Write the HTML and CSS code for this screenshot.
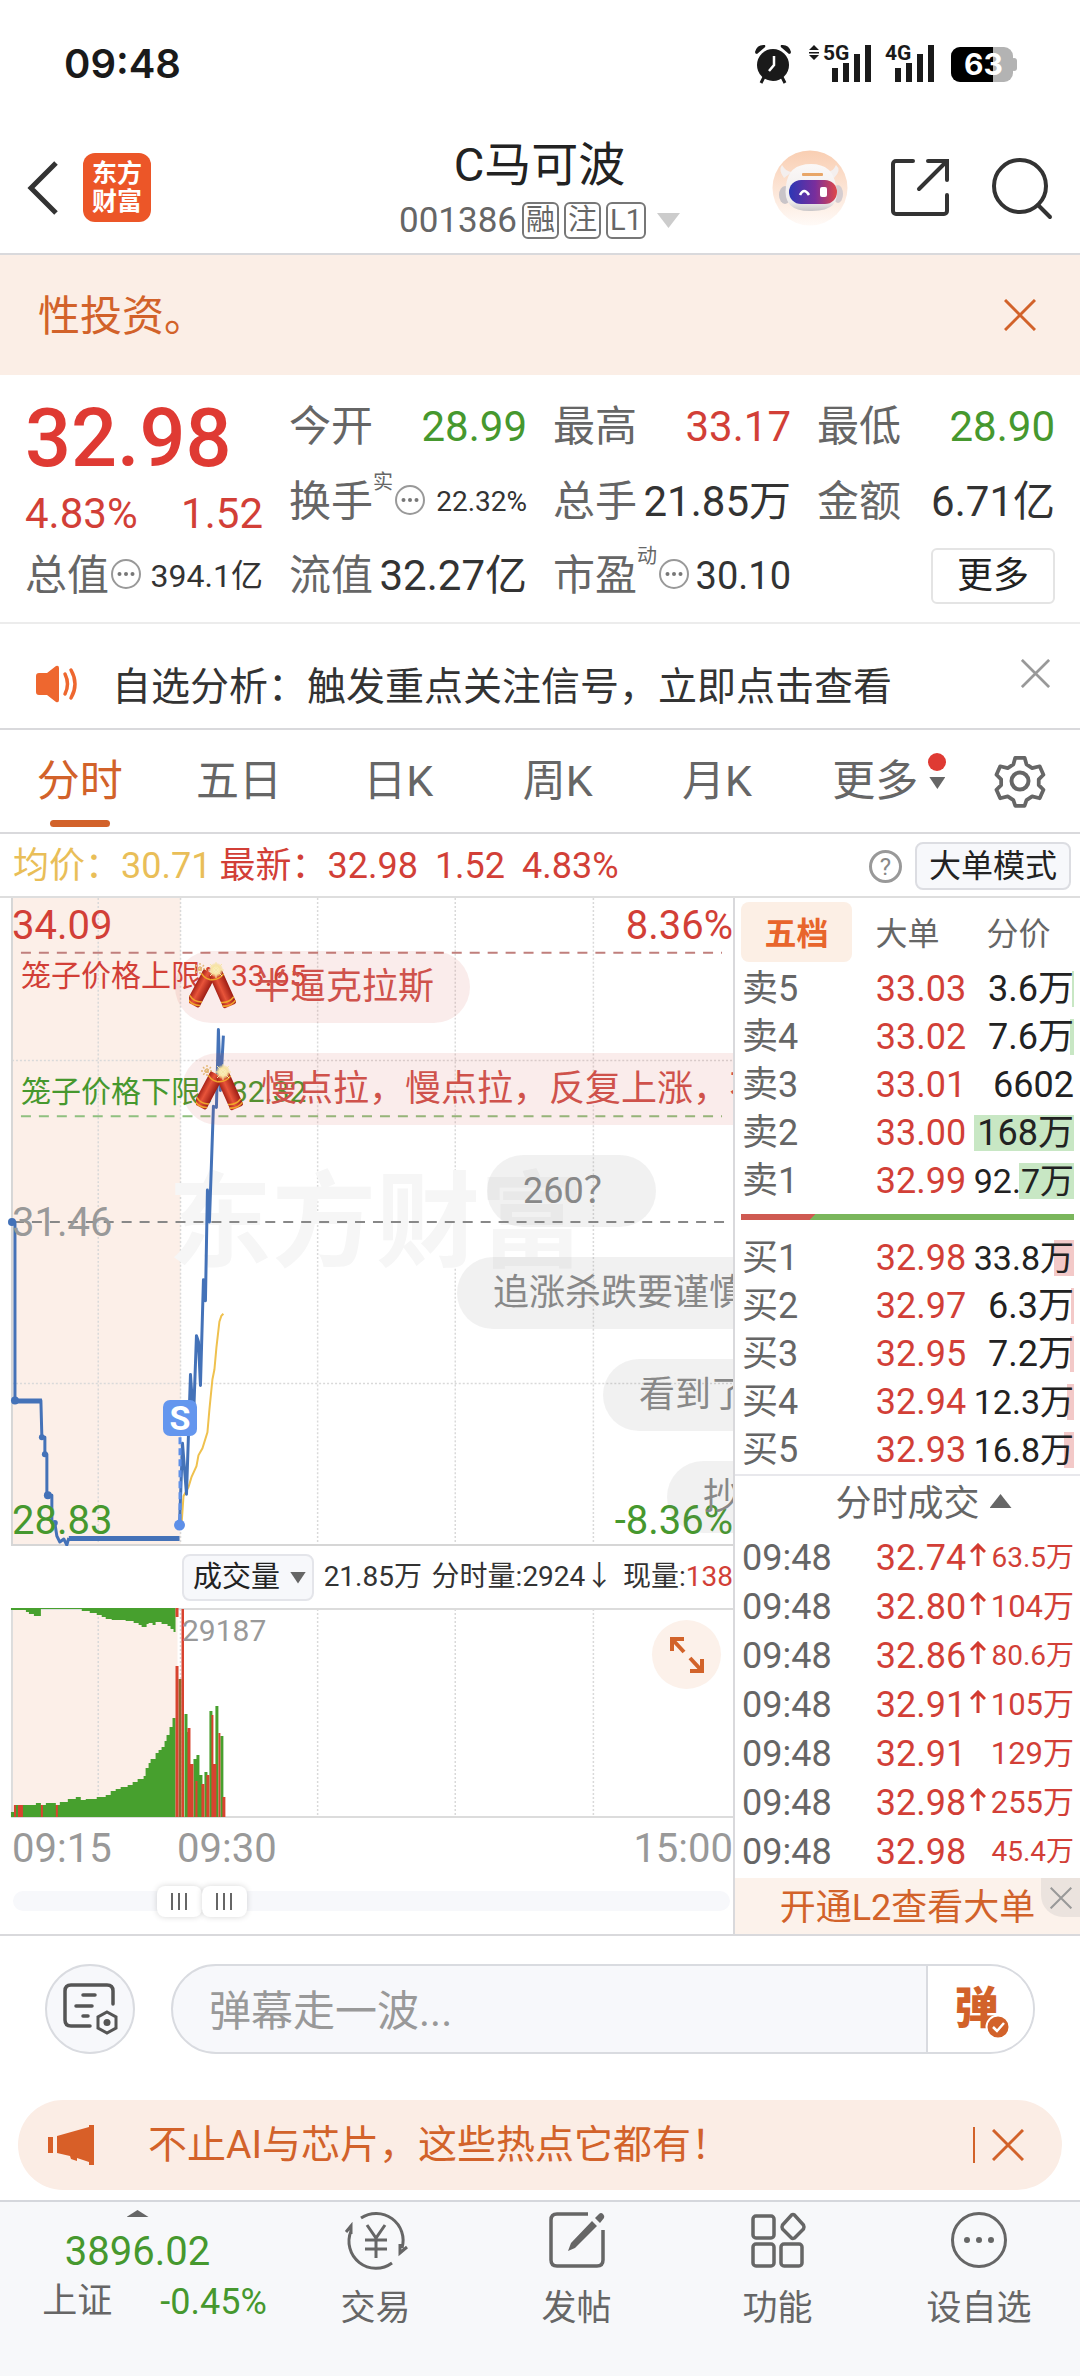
FILE: index.html
```html
<!DOCTYPE html>
<html lang="zh-CN">
<head>
<meta charset="utf-8">
<meta name="viewport" content="width=device-width, initial-scale=1">
<title>C马可波 001386</title>
<link rel="stylesheet" href="styles.css">
</head>
<body>
<svg class="defs" aria-hidden="true">
  <defs>
    <linearGradient id="tube" x1="0" y1="0" x2="1" y2="0"><stop offset="0" stop-color="#a82318"/><stop offset=".4" stop-color="#e8543a"/><stop offset="1" stop-color="#9c1c14"/></linearGradient>
    <radialGradient id="spark"><stop offset="0" stop-color="#fffbe0"/><stop offset=".6" stop-color="#f8e3a0"/><stop offset="1" stop-color="#f3d98c" stop-opacity=".3"/></radialGradient>
    <symbol id="cracker" viewBox="0 0 46 50">
      <path d="M10 1v12M4 7h12M6 3l8 8M14 3l-8 8" stroke="#e3b878" stroke-width="1.4" stroke-dasharray="2 1"/>
      <g transform="rotate(28 19 12)"><rect x="12" y="10" width="14" height="37" rx="2" fill="url(#tube)"/><path d="M12 15q7 4 14 0M12 40q7 4 14 0M12 44q7 4 14 0" stroke="#f0a52c" stroke-width="1.6" fill="none"/></g>
      <g transform="rotate(-24 26 12)"><rect x="19" y="10" width="14" height="37" rx="2" fill="url(#tube)"/><path d="M19 15q7 4 14 0M19 40q7 4 14 0M19 44q7 4 14 0" stroke="#f0a52c" stroke-width="1.6" fill="none"/></g>
      <circle cx="26" cy="8" r="7" fill="url(#spark)"/>
      <path d="M26 0v16M18 8h16M20 2l12 12M32 2L20 14" stroke="#f6e6a8" stroke-width="1"/>
    </symbol>
    <symbol id="cross" viewBox="0 0 32 32"><path d="M1 1l30 30M31 1L1 31" fill="none" stroke="currentColor" stroke-width="3"/></symbol>
    <symbol id="dots" viewBox="0 0 32 32"><circle cx="16" cy="16" r="14" fill="none" stroke="#999" stroke-width="2"/><g fill="#777"><circle cx="9.500" cy="16" r="2"/><circle cx="16" cy="16" r="2"/><circle cx="22.500" cy="16" r="2"/></g></symbol>
    <symbol id="up" viewBox="0 0 16 24"><path d="M8 23V3M1 9l7-7 7 7" fill="none" stroke="#d23a30" stroke-width="3"/></symbol>
  </defs>
</svg>

<div class="status">
  <span class="clock">09:48</span>
  <svg class="status-icons" width="264" height="42" viewBox="0 0 264 42" role="img" aria-label="闹钟 5G 4G 电量63">
    <g fill="#1a1a1a">
      <circle cx="18" cy="22" r="16"/>
      <path d="M0 9Q2 1 10 2Q11 4 9 5L2 11Q0 11 0 9zM36 9Q34 1 26 2Q25 4 27 5L34 11Q36 11 36 9z"/>
      <path d="M9 34l-3 6M27 34l3 6" stroke="#1a1a1a" stroke-width="3"/>
      <path d="M19 13v9l-5 6" stroke="#fff" stroke-width="2.500" fill="none"/>
      <path d="M59 2l5 5H54zM59 17l-5-5h10zM54 9h10v1.500H54z"/>
      <text x="68" y="17" class="net">5G</text><text x="130" y="17" class="net">4G</text>
      <path d="M77 25h6v14h-6zM88 20h6v19h-6zM99 11h6v28h-6zM110 2h6v37h-6zM140 25h6v14h-6zM151 20h6v19h-6zM162 11h6v28h-6zM173 2h6v37h-6z"/>
    </g>
    <rect x="196" y="4" width="62" height="35" rx="9" fill="#b3b3b3"/><rect x="256" y="15" width="6" height="13" rx="3" fill="#b3b3b3"/>
    <path d="M205 4h33v35h-33a9 9 0 0 1-9-9V13a9 9 0 0 1 9-9z" fill="#000"/>
    <text x="209" y="32" class="bat">63</text>
  </svg>
</div>

<header class="top">
  <div class="top-left">
    <button class="icon-btn" aria-label="返回"><svg width="32" height="56" viewBox="0 0 32 56"><path d="M29 3L4 28l25 25" fill="none" stroke="#333" stroke-width="5"/></svg></button>
    <a class="logo" href="#"><span>东方</span><span>财富</span></a>
  </div>
  <div class="top-mid">
    <h1>C马可波</h1>
    <p class="code"><span>001386</span><span class="tag">融</span><span class="tag">注</span><span class="tag">L1</span><i class="tri-down big"></i></p>
  </div>
  <div class="top-right">
    <button class="icon-btn" aria-label="助手"><svg width="76" height="76" viewBox="0 0 76 76">
      <defs><linearGradient id="rb" x2="0" y2="1"><stop stop-color="#f9ceb2"/><stop offset="1" stop-color="#fffaf7"/></linearGradient><linearGradient id="rv"><stop stop-color="#2b37b5"/><stop offset=".55" stop-color="#7a2e9c"/><stop offset="1" stop-color="#e04848"/></linearGradient><linearGradient id="rh" x2="0" y2="1"><stop stop-color="#fbf8f7"/><stop offset=".8" stop-color="#efecec"/><stop offset="1" stop-color="#c9c6c8"/></linearGradient></defs>
      <circle cx="38" cy="38" r="37.500" fill="url(#rb)"/>
      <path d="M12 28Q6 20 10 15Q14 22 20 22zM62 28Q70 20 64 15Q61 22 55 22z" fill="#f4efee"/>
      <ellipse cx="13" cy="45" rx="6" ry="9" fill="#c9c4c8"/><ellipse cx="66" cy="44" rx="5" ry="9" fill="#d5cdd0"/>
      <path d="M14 36Q16 14 39 14Q61 14 64 36Q70 61 40 61Q10 62 14 36z" fill="url(#rh)"/>
      <rect x="17" y="30" width="48" height="24" rx="12" fill="url(#rv)"/>
      <rect x="30" y="23" width="21" height="3" rx="1" fill="#e8a668"/>
      <path d="M28 45q4-8 9 0" stroke="#fff" stroke-width="2.600" fill="none"/><rect x="48" y="37" width="7" height="10" rx="2" fill="#fff"/>
    </svg></button>
    <button class="icon-btn" aria-label="分享"><svg width="60" height="60" viewBox="0 0 60 60"><g fill="none" stroke="#333" stroke-width="4" stroke-linecap="round"><path d="M23 3H6a3 3 0 0 0-3 3v47a3 3 0 0 0 3 3h48a3 3 0 0 0 3-3V37M38 3h19v19M56 4L29 31"/></g></svg></button>
    <button class="icon-btn" aria-label="搜索"><svg width="60" height="60" viewBox="0 0 60 60"><g fill="none" stroke="#333" stroke-width="4" stroke-linecap="round"><circle cx="28" cy="28" r="26"/><path d="M46 47l12 12"/></g></svg></button>
  </div>
</header>

<div class="notice">
  <span>性投资。</span>
  <button class="icon-btn orange" aria-label="关闭"><svg width="32" height="32"><use href="#cross"/></svg></button>
</div>

<section class="quote">
  <div class="qcol">
    <div class="price">32.98</div>
    <div class="chg red"><span>4.83%</span><span>1.52</span></div>
    <div class="qrow"><span class="lab">总值<svg class="dots"><use href="#dots"/></svg></span><span class="v-md">394.1亿</span></div>
  </div>
  <div class="qcol">
    <div class="qrow"><span class="lab">今开</span><span class="green">28.99</span></div>
    <div class="qrow"><span class="lab">换手<small>实</small><svg class="dots"><use href="#dots"/></svg></span><span class="v-sm">22.32%</span></div>
    <div class="qrow"><span class="lab">流值</span><span>32.27亿</span></div>
  </div>
  <div class="qcol">
    <div class="qrow"><span class="lab">最高</span><span class="red">33.17</span></div>
    <div class="qrow"><span class="lab">总手</span><span>21.85万</span></div>
    <div class="qrow"><span class="lab">市盈<small>动</small><svg class="dots"><use href="#dots"/></svg></span><span class="v-lg">30.10</span></div>
  </div>
  <div class="qcol">
    <div class="qrow"><span class="lab">最低</span><span class="green">28.90</span></div>
    <div class="qrow"><span class="lab">金额</span><span>6.71亿</span></div>
    <div class="qrow end"><button class="more">更多</button></div>
  </div>
</section>

<div class="alert">
  <svg width="46" height="38" viewBox="0 0 46 38"><path d="M2 11q0-3 3-3h8L22 1q3-1 3 2v32q0 3-3 2l-9-7H5q-3 0-3-3z" fill="#ee672f"/><path d="M31 9q5 10 0 20M37 5q8 14 0 28" fill="none" stroke="#ee672f" stroke-width="3.500" stroke-linecap="round"/></svg>
  <a href="#">自选分析：触发重点关注信号，立即点击查看</a>
  <button class="icon-btn grey" aria-label="关闭"><svg width="29" height="29"><use href="#cross"/></svg></button>
</div>

<nav class="tabs">
  <a class="on" href="#">分时</a><a href="#">五日</a><a href="#">日K</a><a href="#">周K</a><a href="#">月K</a>
  <a class="tab-more" href="#">更多<span class="marks"><i class="dot"></i><i class="tri-down"></i></span></a>
  <button class="icon-btn gear" aria-label="设置"><svg width="52" height="54" viewBox="0 0 52 54"><g fill="none" stroke="#666" stroke-width="4" stroke-linejoin="round"><path d="M21 3h10l2 7 6 4 8-2 4 9-5 5v6l5 5-4 9-8-2-6 4-2 6H21l-2-6-6-4-8 2-4-9 5-5v-6l-5-5 4-9 8 2 6-4z" transform="translate(1.500 1) scale(.94)"/><circle cx="26" cy="27" r="8.500"/></g></svg></button>
</nav>

<div class="info">
  <span class="gold">均价：30.71</span>
  <span class="red last">最新：<b>32.98</b><b>1.52</b><b>4.83%</b></span>
  <span class="help">?</span>
  <button class="mode">大单模式</button>
</div>

<main class="board">
  <section class="left">
    <div class="chart">
      <svg class="plot" viewBox="0 897 735 650" preserveAspectRatio="none">
        <rect x="12" y="897" width="169" height="649" fill="#fcefe8"/>
        <g stroke="#d9d9d9" stroke-width="1.500" stroke-dasharray="2 2"><path d="M98.500 897V1546M181 897V1546M318.500 897V1546M456.500 897V1546M595 897V1546M12 1060H735M12 1384H735"/></g>
        <path d="M12 897V1546H735" fill="none" stroke="#d6d6d6" stroke-width="2"/>
      </svg>
      <div class="mark">东方财富</div>
      <svg class="plot" viewBox="0 897 735 650" preserveAspectRatio="none">
        <g fill="none" stroke-width="2" stroke-dasharray="10 8">
          <path d="M21 952H724" stroke="#c07f7c"/><path d="M21 1116H724" stroke="#8fc07f"/><path d="M14 1222H734" stroke="#888"/>
        </g>
        <path d="M182 1526L184 1497L189 1488L192 1478L197 1467L199 1456L203 1449L208 1433L210 1410L213 1380L215 1370L217 1348L220 1322L222 1316L224 1314" fill="none" stroke="#efc14e" stroke-width="2"/>
        <g fill="none" stroke="#4472b8" stroke-width="3" stroke-linejoin="round">
          <path d="M12 1222H15V1401H41L42 1438H45V1455H47V1496H52V1524H55L57 1537L60 1543L64 1540L67 1546L69 1539"/>
          <path d="M16 1401.500H42M69 1539.500H180" stroke-width="5"/>
          <path d="M180 1526L183 1444L187 1495L191 1375L194 1420L197 1336L199 1342L201 1386L204 1280L206 1301L208 1190L210 1222L214 1106L217 1107L219 1029L221 1090L224 1035"/>
        </g>
        <g fill="#4472b8"><circle cx="12" cy="1222" r="4"/><circle cx="15" cy="1401" r="4"/><circle cx="42" cy="1438" r="3"/><circle cx="45" cy="1455" r="3"/><circle cx="48" cy="1496" r="4"/><circle cx="55" cy="1524" r="3"/></g>
        <path d="M180.500 1438V1522" stroke="#5d8fe8" stroke-width="3" stroke-dasharray="7 4"/>
        <circle cx="180" cy="1526" r="5.500" fill="#5d8fe8"/>
      </svg>
      <span class="ax red tl">34.09</span><span class="ax red tr">8.36%</span>
      <span class="ax mut ml">31.46</span>
      <span class="ax green bl">28.83</span><span class="ax green br">-8.36%</span>
      <span class="cage red up">笼子价格上限：33.65</span>
      <span class="cage green low">笼子价格下限：32.32</span>
      <span class="sell">S</span>
      <div class="pill hot p1"><svg><use href="#cracker"/></svg>半逼克拉斯</div>
      <div class="pill hot p2"><svg><use href="#cracker"/></svg>慢点拉，慢点拉，反复上涨，不</div>
      <div class="pill p3">260？</div>
      <div class="pill p4">追涨杀跌要谨慎</div>
      <div class="pill p5">看到了</div>
      <div class="pill p6">抄底</div>
    </div>

    <div class="volhead">
      <label class="pick"><select aria-label="指标"><option>成交量</option></select><i class="tri-down"></i></label>
      <span>21.85万</span><span>分时量:2924↓</span><span>现量:<b class="red">138</b></span>
    </div>

    <div class="vol">
      <svg class="plot" viewBox="0 1609 735 210" preserveAspectRatio="none">
        <rect x="12" y="1610" width="166" height="208" fill="#fcefe8"/>
        <path d="M98.500 1610V1818M181 1610V1818M318.500 1610V1818M456.500 1610V1818M595 1610V1818" stroke="#d9d9d9" stroke-width="1.500" stroke-dasharray="2 2"/>
        <path d="M12 1610H735M12 1610V1818H735" fill="none" stroke="#dcdcdc" stroke-width="2"/>
        <g fill="#47a02e">
          <path d="M11 1818V1813H14V1806H36V1804H41V1806H46V1804H56V1806H60V1803H68V1800H76V1798H81V1801H86V1800H97V1798H106V1796H111V1792H116V1790H121V1788H128V1786H133V1783H138V1780H144V1777H146V1769H149V1764H151V1760H156V1754H159V1751H162V1748H165V1742H167V1736H170V1728H173V1719H176V1818z"/>
          <path d="M11 1609H176V1633H174V1630H171V1627H168V1625H162V1623H156V1626H153V1624H149V1625H147V1628H142V1626H139V1624H134V1622H126V1621H112V1620H106V1618H102V1616H97V1614H90V1612H82V1610H41V1617H34V1615H29V1613H26V1611H11z"/>
          <path d="M185 1715h3v103h-3zM187 1733h3v85h-3zM194 1760h3v58h-3zM197 1756h3v62h-3zM200 1776h3v42h-3zM205 1773h3v45h-3zM210 1712h3v106h-3zM216 1707h3v111h-3zM221 1737h3v81h-3z"/>
        </g>
        <path d="M179 1680h3v138h-3z" fill="#8a6a2c"/>
        <path d="M176 1609h3v9h-3zM176 1667h3v151h-3zM182 1610h2.500v208h-2.500zM188 1729h3v89h-3zM191 1765h3v53h-3zM196 1782h2v36h-2zM202 1785h3v33h-3zM207 1776h3v42h-3zM212 1716h2v102h-2zM214 1765h3v53h-3zM219 1734h2v84h-2zM223 1798h3v20h-3zM14 1806h2v12h-2zM18 1806h5v12h-5zM41 1806h2v12h-2zM56 1806h2v12h-2z" fill="#d8432f"/>
      </svg>
      <span class="peak">29187</span>
      <button class="expand" aria-label="全屏"><svg width="34" height="36" viewBox="0 0 34 36"><g fill="none" stroke="#d2632a" stroke-width="4"><path d="M2 14V2h12M2 2l12 13M32 22v12H20M32 34L20 21"/></g></svg></button>
    </div>

    <div class="times"><span>09:15</span><span>09:30</span><span>15:00</span></div>

    <div class="range">
      <input type="range" min="0" max="1000" value="214" aria-label="开始时间">
      <input type="range" min="0" max="1000" value="281" aria-label="结束时间">
    </div>
  </section>

  <aside class="right">
    <div class="seg"><button class="on">五档</button><button>大单</button><button>分价</button></div>
    <table class="book sellside">
      <tr><th>卖5</th><td>33.03</td><td style="--w:2px">3.6万</td></tr>
      <tr><th>卖4</th><td>33.02</td><td style="--w:4px">7.6万</td></tr>
      <tr><th>卖3</th><td>33.01</td><td style="--w:0px">6602</td></tr>
      <tr><th>卖2</th><td>33.00</td><td style="--w:100px">168万</td></tr>
      <tr><th>卖1</th><td>32.99</td><td class="long" style="--w:55px">92.7万</td></tr>
    </table>
    <div class="ratio"></div>
    <table class="book buyside">
      <tr><th>买1</th><td>32.98</td><td class="long" style="--w:20px">33.8万</td></tr>
      <tr><th>买2</th><td>32.97</td><td style="--w:3px">6.3万</td></tr>
      <tr><th>买3</th><td>32.95</td><td style="--w:4px">7.2万</td></tr>
      <tr><th>买4</th><td>32.94</td><td class="long" style="--w:7px">12.3万</td></tr>
      <tr><th>买5</th><td>32.93</td><td class="long" style="--w:10px">16.8万</td></tr>
    </table>
    <button class="deals">分时成交<i class="tri-up"></i></button>
    <table class="ticks">
      <tr><th>09:48</th><td>32.74</td><td class="sm"><svg><use href="#up"/></svg>63.5万</td></tr>
      <tr><th>09:48</th><td>32.80</td><td><svg><use href="#up"/></svg>104万</td></tr>
      <tr><th>09:48</th><td>32.86</td><td class="sm"><svg><use href="#up"/></svg>80.6万</td></tr>
      <tr><th>09:48</th><td>32.91</td><td><svg><use href="#up"/></svg>105万</td></tr>
      <tr><th>09:48</th><td>32.91</td><td>129万</td></tr>
      <tr><th>09:48</th><td>32.98</td><td><svg><use href="#up"/></svg>255万</td></tr>
      <tr><th>09:48</th><td>32.98</td><td class="sm">45.4万</td></tr>
    </table>
    <div class="l2"><a href="#">开通L2查看大单</a><button aria-label="关闭"><svg width="22" height="22"><use href="#cross"/></svg></button></div>
  </aside>
</main>

<div class="chat">
  <button class="round" aria-label="弹幕设置"><svg width="56" height="52" viewBox="0 0 56 52"><g fill="none" stroke="#555" stroke-width="3.500" stroke-linecap="round"><path d="M28 43H9q-6 0-6-6V8q0-6 6-6h36q6 0 6 6v13M21 12h12M14 23h16M21 33h5"/><path d="M45 29l9 5v11l-9 5-9-5V34z" stroke-width="3"/></g><circle cx="45" cy="39.500" r="3.500" fill="#555"/></svg></button>
  <div class="field">
    <input type="text" placeholder="弹幕走一波..." aria-label="弹幕">
    <button aria-label="弹幕开关"><span>弹</span><svg width="26" height="26" viewBox="-2 -2 26 26"><circle cx="11" cy="11" r="11.500" fill="#d2622a" stroke="#fff" stroke-width="2"/><path d="M6 11l4 4 7-8" fill="none" stroke="#fff" stroke-width="2.500"/></svg></button>
  </div>
</div>

<div class="promo">
  <svg width="46" height="40" viewBox="0 0 46 40"><g fill="#d85f28"><path d="M0 12h5v16H0zM9 11L41 2V0h5v40h-5v-3L29 33v3l-6-2-1-3L9 28z"/></g></svg>
  <a href="#">不止AI与芯片，这些热点它都有！</a>
  <i class="sep"></i>
  <button class="icon-btn orange" aria-label="关闭"><svg width="32" height="32"><use href="#cross"/></svg></button>
</div>

<nav class="bottom">
  <a class="index green" href="#"><i class="tri-up small"></i><span class="pt">3896.02</span><span class="sub"><em>上证</em><span>-0.45%</span></span></a>
  <a href="#"><svg viewBox="0 0 66 60"><g fill="none" stroke="#666" stroke-width="3"><path d="M18 8A27 27 0 0 1 59 38M49 53A27 27 0 0 1 8 21M3 22l5-6v8M64 37l-7 6V34"/><path d="M24 15l9 13 9-13M22 30h22M22 39h22M33 28v20"/></g></svg>交易</a>
  <a href="#"><svg viewBox="0 0 66 60"><path d="M44 4H13q-6 0-6 6v40q0 6 6 6h40q6 0 6-6V20" fill="none" stroke="#666" stroke-width="3.500"/><path d="M48 11l5 5-22 22-7 3 3-8zM51 8l4-4q2-2 4 0t1 4l-4 5z" fill="#666"/></svg>发帖</a>
  <a href="#"><svg viewBox="0 0 66 60"><g fill="none" stroke="#666" stroke-width="3.500"><rect x="8" y="6" width="21" height="22" rx="3"/><rect x="8" y="34" width="21" height="22" rx="3"/><rect x="36" y="34" width="21" height="22" rx="3"/><path d="M46.500 5q1.500-1 3 0l9 10q1 2 0 4l-9 9q-2 1-3 0l-9-9q-1-2 0-4z"/></g></svg>功能</a>
  <a href="#"><svg viewBox="0 0 66 60"><circle cx="33" cy="30" r="26.500" fill="none" stroke="#666" stroke-width="3"/><g fill="#666"><circle cx="21" cy="30" r="3"/><circle cx="33" cy="30" r="3"/><circle cx="45" cy="30" r="3"/></g></svg>设自选</a>
</nav>
</body>
</html>
```
FILE: styles.css
```css
* { box-sizing: border-box; }
body { margin: 0; background: #fff; color: #333; font-family: Roboto, "Noto Sans CJK SC", sans-serif; font-size: 42px; line-height: 1; min-height: 100vh; display: flex; flex-direction: column; }
button, input, select { font: inherit; color: inherit; border: 0; background: none; padding: 0; margin: 0; }
a { color: inherit; text-decoration: none; }
h1, p { margin: 0; font-weight: 400; }
svg { display: block; flex: none; overflow: visible; }
i, em { font-style: normal; }
b { font-weight: 400; }
span, a { white-space: nowrap; }
.defs { position: absolute; width: 0; height: 0; }
.icon-btn { display: flex; }
.red { color: #d23f37; }
.green { color: #46982e; }
.orange { color: #d2622a; }
.grey { color: #999; }
.gold { color: #e9be58; }
.tri-down { width: 16px; height: 12px; background: #666; clip-path: polygon(0 0, 100% 0, 50% 100%); }
.tri-down.big { width: 23px; height: 15px; background: #ccc; margin-left: 6px; }
.tri-up { width: 22px; height: 14px; background: #666; clip-path: polygon(50% 0, 100% 100%, 0 100%); }
.tri-up.small { height: 7px; }

.status { height: 128px; padding: 0 61px 0 64px; display: flex; align-items: center; justify-content: space-between; }
.clock { font: 600 40px/1 Inter, sans-serif; color: #1a1a1a; }
.net { font: 700 21px Roboto, sans-serif; }
.bat { font: 700 30px Inter, sans-serif; fill: #fff; }

.top { height: 127px; padding: 0 28px 6px 27px; border-bottom: 2px solid #d9d9dc; display: grid; grid-template-columns: 1fr auto 1fr; align-items: center; }
.top-left { display: flex; align-items: center; gap: 24px; }
.logo { width: 68px; height: 69px; border-radius: 12px; background: #ec5628; color: #fff; font-weight: 700; font-size: 25px; line-height: 28px; display: flex; flex-direction: column; align-items: center; justify-content: center; }
.top-mid { text-align: center; display: flex; flex-direction: column; align-items: center; gap: 6px; }
h1 { font-size: 47px; line-height: 60px; color: #222; }
.code { display: flex; align-items: center; gap: 5px; font-size: 35px; line-height: 40px; color: #666; }
.tag { border: 2px solid #777; border-radius: 6px; height: 37px; padding: 0 2px; font-size: 29px; line-height: 32px; }
.top-right { display: flex; align-items: center; justify-content: flex-end; gap: 42px; }

.notice { height: 120px; padding: 0 44px 0 38px; background: #fbeee6; display: flex; align-items: center; justify-content: space-between; color: #d2622a; line-height: 60px; }
.notice span { padding-top: 4px; }

.quote { padding: 14px 25px 9px; border-bottom: 2px solid #ececec; display: grid; grid-template-columns: repeat(4, 1fr); gap: 26px; line-height: 60px; }
.price { height: 100px; font-size: 81px; line-height: 100px; font-weight: 500; color: #df3a33; }
.chg { height: 50px; line-height: 50px; display: flex; justify-content: space-between; }
.qrow { height: 74px; display: flex; align-items: center; justify-content: space-between; }
.qrow:first-child { height: 76px; }
.qrow.end { justify-content: flex-end; }
.lab { display: flex; align-items: center; color: #666; }
.lab small { font-size: 20px; line-height: 20px; align-self: flex-start; }
.dots { width: 32px; height: 32px; margin: 0 0 4px 1px; }
.v-lg { font-size: 38px; }
.v-md { font-size: 32px; }
.v-sm { font-size: 28px; }
.more { width: 124px; height: 56px; border: 2px solid #e4e4e4; border-radius: 6px; font-size: 36px; line-height: 50px; color: #222; }

.alert { height: 106px; padding: 22px 30px 0 34px; border-bottom: 2px solid #d9d9dc; display: flex; align-items: center; font-size: 39px; line-height: 56px; }
.alert > svg { margin-bottom: 6px; }
.alert a { margin: 0 auto 0 32px; }
.alert .icon-btn { margin-bottom: 28px; }

.tabs { height: 104px; border-bottom: 2px solid #d9d9dc; display: flex; align-items: center; color: #666; font-size: 43px; line-height: 108px; }
.tabs > a { flex: 160; text-align: center; position: relative; }
.tabs .on { color: #d2622a; }
.tabs .on::after { content: ""; position: absolute; left: 50%; bottom: 8px; width: 60px; height: 7px; margin-left: -30px; border-radius: 4px; background: #d2622a; }
.tabs .tab-more { flex: 186; display: flex; align-items: center; justify-content: center; gap: 10px; }
.marks { display: flex; flex-direction: column; align-items: center; gap: 6px; margin-bottom: 20px; }
.dot { width: 18px; height: 18px; border-radius: 50%; background: #df3a33; }
.gear { margin: 0 34px 0 12px; }

.info { height: 64px; padding: 2px 9px 0 13px; border-bottom: 2px solid #dedede; display: flex; align-items: center; font-size: 36px; line-height: 60px; }
.last { margin: 0 auto 0 8px; }
.last b + b { margin-left: 17px; }
.help { width: 33px; height: 33px; border: 3px solid #999; border-radius: 50%; color: #888; font-size: 24px; line-height: 28px; text-align: center; }
.mode { margin-left: 13px; width: 156px; height: 48px; border: 2px solid #dcdde2; border-radius: 8px; background: #f7f8fb; color: #222; font-size: 32px; line-height: 44px; }

.board { display: grid; grid-template-columns: 735fr 345fr; border-bottom: 2px solid #d9d9dc; }
.left { border-right: 2px solid #d9d9dc; min-width: 0; }
.chart { position: relative; height: 648px; overflow: hidden; }
.plot { position: absolute; inset: 0; width: 100%; height: 100%; }
.ax { position: absolute; font-size: 40px; line-height: 48px; }
.mut { color: #999; }
.tl { left: 12px; top: 4px; }
.tr { right: 0; top: 4px; }
.ml { left: 12px; top: 301px; }
.bl { left: 12px; bottom: 1px; }
.br { right: 0; bottom: 1px; }
.cage { position: absolute; left: 21px; font-size: 30px; line-height: 40px; }
.up { top: 58px; }
.low { top: 174px; }
.mark { position: absolute; left: 168px; top: 266px; font-size: 104px; line-height: 120px; font-weight: 700; color: #f6f6f6; }
.sell { position: absolute; left: 163px; top: 502px; width: 34px; height: 36px; border-radius: 7px; background: #6496ee; color: #fff; font-weight: 700; font-size: 34px; line-height: 36px; text-align: center; }
.pill { position: absolute; height: 72px; padding: 0 36px; border-radius: 36px; background: rgba(120, 120, 120, .1); color: #888; font-size: 36px; line-height: 72px; white-space: nowrap; }
.hot { background: rgba(210, 80, 70, .11); color: #cf524b; padding-left: 14px; display: flex; align-items: center; }
.hot svg { width: 48px; height: 50px; margin-right: 17px; }
.p1 { left: 175px; top: 53px; }
.p2 { left: 182px; top: 155px; }
.p3 { left: 487px; top: 257px; }
.p4 { left: 457px; top: 359px; }
.p5 { left: 603px; top: 461px; }
.p6 { left: 667px; top: 563px; }

.volhead { height: 62px; padding-left: 182px; display: flex; align-items: center; justify-content: space-between; font-size: 28px; }
.pick { position: relative; width: 132px; height: 47px; }
.pick select { appearance: none; width: 100%; height: 100%; padding-left: 9px; border: 2px solid #e4e5ea; border-radius: 8px; background: #f7f8fb; color: #222; font-size: 29px; line-height: 40px; }
.pick .tri-down { position: absolute; right: 8px; top: 18px; }
.vol { position: relative; height: 210px; }
.peak { position: absolute; left: 182px; top: 7px; font-size: 30px; line-height: 32px; color: #999; }
.expand { position: absolute; right: 12px; top: 12px; width: 69px; height: 69px; border-radius: 50%; background: #fcf1ea; display: flex; align-items: center; justify-content: center; }
.times { height: 62px; padding: 0 0 0 12px; display: grid; grid-template-columns: 165px 1fr auto; align-items: center; font-size: 40px; color: #999; }
.range { position: relative; height: 36px; margin: 3px 3px 0 13px; }
.range::before { content: ""; position: absolute; left: 0; right: 0; top: 8px; height: 20px; border-radius: 10px; background: #f7f8fb; }
.range input { position: absolute; inset: 0; width: 100%; height: 36px; appearance: none; pointer-events: none; }
.range input::-webkit-slider-thumb { appearance: none; pointer-events: auto; width: 45px; height: 31px; border-radius: 8px; box-shadow: 0 0 6px rgba(0, 0, 0, .16); background: repeating-linear-gradient(90deg, #666 0 2px, #fff 2px 7px) 14px 7px / 16px 17px no-repeat #fff; }

.right { display: flex; flex-direction: column; min-width: 0; }
.seg { margin: 4px 6px 3px; height: 60px; display: grid; grid-template-columns: repeat(3, 1fr); color: #666; font-size: 32px; }
.seg button { padding-top: 4px; }
.seg .on { background: #fcefe5; border-radius: 8px; color: #e8652c; font-weight: 700; }
table { border-collapse: collapse; width: 100%; table-layout: fixed; font-size: 36px; }
th { font-weight: 400; text-align: left; color: #666; padding: 0 0 0 7px; width: 35%; }
td { text-align: right; padding: 0; color: #d23f37; }
tr > :nth-child(3) { width: 33%; padding-right: 6px; }
.book tr { height: 48px; }
.book td:last-child { color: #222; background: linear-gradient(var(--bar), var(--bar)) right 6px center / var(--w) 36px no-repeat; }
.book .long { font-size: 34px; }
.sellside { --bar: #c8e7c4; }
.buyside { --bar: #f3c9c8; }
.ratio { height: 6px; margin: 9px 6px 14px; background: linear-gradient(135deg, #cf5a52 0 22%, #7ab65c 22%); }
.deals { height: 58px; border-top: 2px solid #e8e8ec; padding-left: 32px; color: #666; font-size: 36px; display: flex; align-items: center; justify-content: center; gap: 10px; }
.deals i { margin-bottom: 6px; }
.ticks { margin-top: 1px; }
.ticks tr { height: 49px; }
.ticks td:last-child { font-size: 31px; position: relative; }
.ticks td.sm:last-child { font-size: 28px; }
.ticks svg { position: absolute; left: 4px; top: 10px; width: 16px; height: 24px; }
.l2 { flex: 1; min-height: 56px; margin-top: 2px; position: relative; background: #fcf2eb; color: #d2622a; font-size: 36px; display: flex; align-items: center; justify-content: center; }
.l2 a { padding-top: 3px; }
.l2 button { position: absolute; right: 0; top: 0; width: 39px; height: 39px; border-bottom-left-radius: 22px; background: #ebe3de; color: #999; display: flex; align-items: center; justify-content: center; }

.chat { padding: 28px 45px 46px; display: flex; gap: 36px; }
.round { width: 90px; height: 90px; border: 2px solid #d9dbe0; border-radius: 50%; background: #f7f8fb; display: flex; align-items: center; justify-content: center; }
.field { flex: 1; height: 90px; border: 2px solid #d9dbe0; border-radius: 45px; background: #f7f8fb; display: flex; overflow: hidden; }
.field input { flex: 1; min-width: 0; padding: 4px 0 0 36px; outline: 0; }
.field input::placeholder { color: #999; opacity: 1; }
.field button { width: 107px; border-left: 2px solid #d9dbe0; background: #fff; color: #d2622a; font-weight: 900; position: relative; padding-right: 8px; font-size: 44px; }
.field button svg { position: absolute; left: 57px; top: 48px; }

.promo { margin: 0 18px 10px; height: 90px; padding: 0 38px 0 30px; border-radius: 45px; background: #fbede5; color: #d2622a; display: flex; align-items: center; font-size: 39px; }
.promo a { margin: 0 auto 0 54px; }
.sep { width: 2px; height: 36px; background: #d2622a; margin-right: 17px; }

.bottom { flex: 1; padding-top: 8px; border-top: 2px solid #d5d7dc; background: #f7f8fa; display: grid; grid-template-columns: 275fr 201fr 201fr 201fr 202fr; align-items: start; color: #666; font-size: 35px; line-height: 48px; min-height: 176px; }
.bottom > a { display: flex; flex-direction: column; align-items: center; gap: 15px; }
.bottom > a > svg { width: 66px; height: 60px; }
.bottom > .index { gap: 0; }
.pt { font-size: 40px; margin-top: 11px; }
.sub { display: flex; gap: 48px; font-size: 36px; line-height: 52px; padding-left: 34px; }
.sub em { color: #666; font-size: 35px; }
```
